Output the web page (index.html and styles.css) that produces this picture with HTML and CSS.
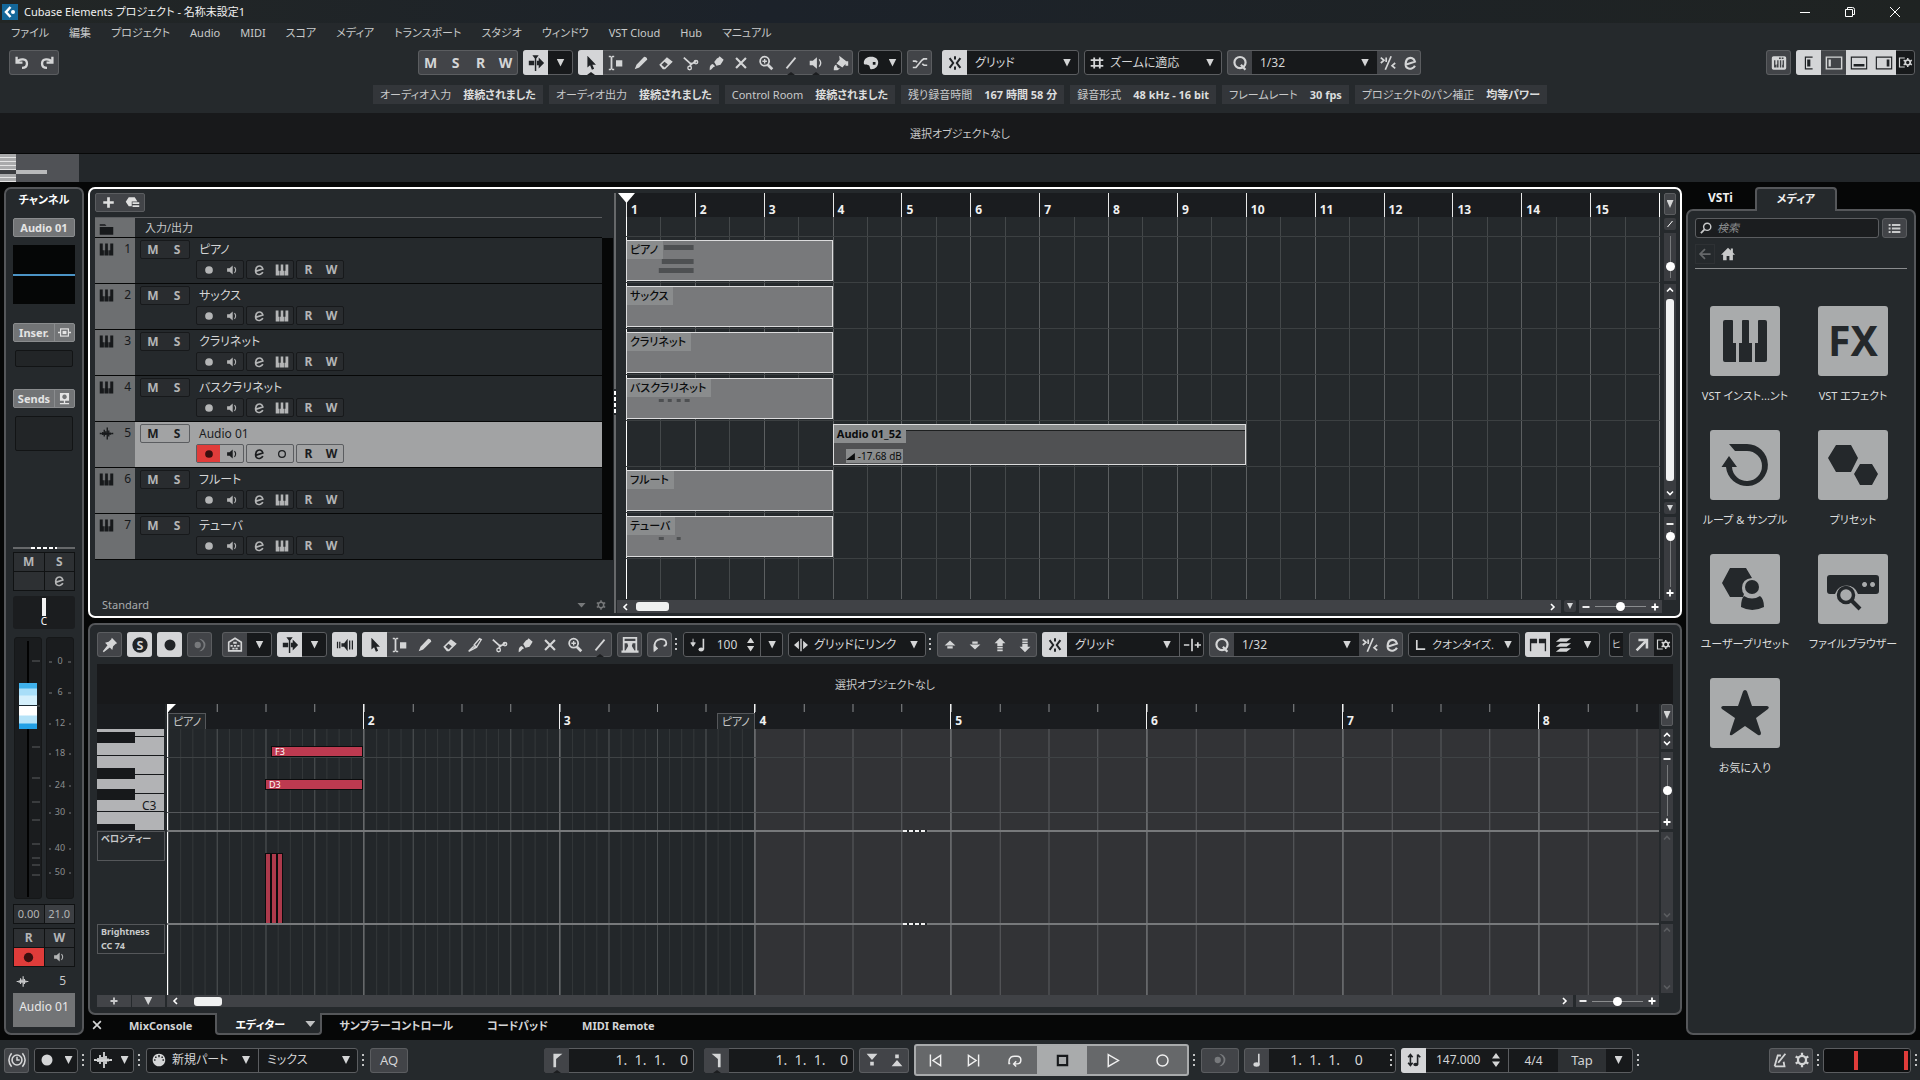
FILE: index.html
```html
<!DOCTYPE html>
<html lang="ja">
<head>
    <meta charset="UTF-8">
    <title>Cubase Elements プロジェクト - 名称未設定1</title>
    <link rel="stylesheet" href="styles.css">
</head>
<body>

<!-- icon set -->
<svg class="defs" width="0" height="0" aria-hidden="true">
    <symbol id="i-undo" viewBox="0 0 20 20"><path d="M4 3v6.500H10.500M4.500 9C7.500 4.500 15.500 5 15.500 10.500c0 3-2 5-5.500 5" fill="none" stroke="currentColor" stroke-width="2.600"/></symbol>
    <symbol id="i-redo" viewBox="0 0 20 20"><path d="M16 3v6.500H9.500M15.500 9C12.500 4.500 4.500 5 4.500 10.500c0 3 2 5 5.500 5" fill="none" stroke="currentColor" stroke-width="2.600"/></symbol>
    <symbol id="i-scroll" viewBox="0 0 20 20"><path d="M2 7.500h6v5H2zM11 7.500h2V4l6 6-6 6v-3.500h-2zM6 1.500h7L10.300 5v14H8.700V5z"/></symbol>
    <symbol id="i-arrow" viewBox="0 0 20 20"><path d="M6 2v13l3-2.500 2 5 2.500-1-2-4.500H15.500z"/></symbol>
    <symbol id="i-range" viewBox="0 0 20 20"><path d="M2 2h2l1 1 1-1h2v1.500H6v13h2V18H6l-1-1-1 1H2v-1.500h2v-13H2zM10 7h7v7h-7z"/></symbol>
    <symbol id="i-pencil" viewBox="0 0 20 20"><path d="M3 17l2-5L13.500 3q3 0 3.500 3L8 15z"/></symbol>
    <symbol id="i-eraser" viewBox="0 0 20 20"><path fill-rule="evenodd" d="M2.500 12L11 3.500l6.500 5L9 17H6.500zM5 12l3.500 3L12 11.500 8.300 8.500z"/></symbol>
    <symbol id="i-scissors" viewBox="0 0 20 20"><path d="M2 4l9 8M16 8L9 12M10 9.500l-1 5" fill="none" stroke="currentColor" stroke-width="2"/><circle cx="8.500" cy="15.500" r="2" fill="none" stroke="currentColor" stroke-width="1.500"/><circle cx="15.500" cy="9" r="2" fill="none" stroke="currentColor" stroke-width="1.500"/></symbol>
    <symbol id="i-glue" viewBox="0 0 20 20"><path d="M8 9l3-4 2-1 1-1.500 4.500 4L17 9l-2 3-4.500 1zM3 16q0-4 3.500-5l2.500 2.500Q7 14 5 17L3 18z"/></symbol>
    <symbol id="i-x" viewBox="0 0 20 20"><path d="M4.500 4.500l11 11M15.500 4.500l-11 11" fill="none" stroke="currentColor" stroke-width="2.400"/></symbol>
    <symbol id="i-zoom" viewBox="0 0 20 20"><circle cx="8.500" cy="8" r="5" fill="none" stroke="currentColor" stroke-width="2"/><path d="M12 12l5 5" stroke="currentColor" stroke-width="3"/><path d="M6 8h5M8.500 5.500v5" stroke="currentColor" stroke-width="1.500"/></symbol>
    <symbol id="i-line" viewBox="0 0 20 20"><path d="M5 16L15 4" stroke="currentColor" stroke-width="2"/></symbol>
    <symbol id="i-speaker" viewBox="0 0 20 20"><path d="M3 7.500h3.500L11 3.500v13l-4.500-4H3z"/><path d="M13.500 6q3.500 4 0 8" fill="none" stroke="currentColor" stroke-width="1.500"/></symbol>
    <symbol id="i-bucket" viewBox="0 0 20 20"><path d="M8 2l9 7-5.500 6L5 10.500l3.500-4zM15 8h3v5h-3zM2 17q0-5 3-5 0 4 4 4l-3 2H2z"/></symbol>
    <symbol id="i-palette" viewBox="0 0 20 20"><path fill-rule="evenodd" d="M2 10C2 5 6 3 10.500 3S18 5.500 18 9.500 15 17 10.500 17c-2.500 0-1-3-3-4.500S2 13 2 10zM12 9v3h3V9z"/></symbol>
    <symbol id="i-cross" viewBox="0 0 20 20"><path d="M2 15h3.500L12 7l2-1.500h4M2 8h3l2 1M12.500 11l2 1.500h3.500" fill="none" stroke="currentColor" stroke-width="1.900"/></symbol>
    <symbol id="i-snap" viewBox="0 0 20 20"><path d="M4 4.500L8 10l-4 5.500M16 4.500L12 10l4 5.500M10 2.500v3.500M10 14v3.500" fill="none" stroke="currentColor" stroke-width="2.200"/></symbol>
    <symbol id="i-hash" viewBox="0 0 20 20"><path d="M1 6h18M1 14h18M6 2v16M14 2v16" fill="none" stroke="currentColor" stroke-width="2.600"/></symbol>
    <symbol id="i-q" viewBox="0 0 20 20"><circle cx="10" cy="9.500" r="6.200" fill="none" stroke="currentColor" stroke-width="2.400"/><path d="M11 12l5 5.500" stroke="currentColor" stroke-width="2.400"/></symbol>
    <symbol id="i-swing" viewBox="0 0 20 20"><path d="M13.500 2.500L7 17.500M2 4l3.500 3L2 10M18 10l-3.500 3 3.500 3M8 4v5" fill="none" stroke="currentColor" stroke-width="1.900"/></symbol>
    <symbol id="i-e" viewBox="0 0 20 20"><path d="M5 12L15.500 8.500C14.500 4.500 11 3.500 8 5S4 13.500 7 15.500s7 .500 8.500-2.500" fill="none" stroke="currentColor" stroke-width="2.400"/></symbol>
    <symbol id="i-keys" viewBox="0 0 20 20"><path d="M1 2h4v9h1.500v7H1zM8.200 2h3.600v9h1v7H7.200v-7h1zM15 2h4v16h-5.500v-7H15z"/></symbol>
    <symbol id="i-keysbox" viewBox="0 0 20 20"><path fill-rule="evenodd" d="M4 2.500h12q2 0 2 2v11q0 2-2 2H4q-2 0-2-2v-11q0-2 2-2zM4.500 7v8H7v-3H6V7zM8 7v4.500h-.500V15h2V7zM11 7v8h1.500V7zM14 7v5h-.500v3h2V7zM10 4v1.500h2V4zM13 4v1.500h2V4z"/></symbol>
    <symbol id="i-zl" viewBox="0 0 20 20"><path d="M14 3.500H6v13h8" fill="none" stroke="currentColor" stroke-width="1.300"/><path d="M8 6h3.500v8H8z"/></symbol>
    <symbol id="i-zi" viewBox="0 0 20 20"><path d="M1.500 3.500h17v13h-17z" fill="none" stroke="currentColor" stroke-width="1.600"/><path d="M4 6h2.500v8H4z"/></symbol>
    <symbol id="i-zb" viewBox="0 0 20 20"><path d="M1.500 3.500h17v13h-17z" fill="none" stroke="currentColor" stroke-width="1.300"/><path d="M4 11h12v3H4z"/></symbol>
    <symbol id="i-zr" viewBox="0 0 20 20"><path d="M1.500 3.500h17v13h-17z" fill="none" stroke="currentColor" stroke-width="1.300"/><path d="M13 6h3v8h-3z"/></symbol>
    <symbol id="i-setup" viewBox="0 0 20 20"><path d="M9 4H2v12h7" fill="none" stroke="currentColor" stroke-width="1.600"/><circle cx="13" cy="10" r="3.300" fill="none" stroke="currentColor" stroke-width="2.200"/><path d="M13 4v2.500M13 13.500V16M7.500 7l2 1M16.500 12l2 1M7.500 13l2-1M16.500 8l2-1" stroke="currentColor" stroke-width="2"/></symbol>
    <symbol id="i-gear" viewBox="0 0 20 20"><circle cx="10" cy="10" r="4.500" fill="none" stroke="currentColor" stroke-width="2.500"/><path d="M10 2v4M10 14v4M3 6l3.500 2M13.500 12l3.500 2M3 14l3.500-2M13.500 8L17 6" stroke="currentColor" stroke-width="2.500"/></symbol>
    <symbol id="i-plus" viewBox="0 0 20 20"><path d="M10 3v14M3 10h14" stroke="currentColor" stroke-width="3.600"/></symbol>
    <symbol id="i-minus" viewBox="0 0 20 20"><path d="M3 10h14" stroke="currentColor" stroke-width="3.600"/></symbol>
    <symbol id="i-preset" viewBox="0 0 20 20"><path d="M5 3h8l3.500 5.500H9V15H5L1 9zM10 9.500h9v2.500h-9zM10 13.500h9V16h-9z"/></symbol>
    <symbol id="i-folder" viewBox="0 0 20 20"><path d="M1 3h7l2 2H1zM1 6.500h18V17H1z"/></symbol>
    <symbol id="i-wave" viewBox="0 0 20 20"><path d="M1 10h2.500M19 10h-2.500M5 8v4M7 5v9M9 7v5M11 2v16M13 6v8M15 8.500v3" stroke="currentColor" stroke-width="1.800"/><path d="M3 9.500h14v1.500H3z"/></symbol>
    <symbol id="i-dot" viewBox="0 0 20 20"><circle cx="10" cy="10" r="5.500"/></symbol>
    <symbol id="i-ring" viewBox="0 0 20 20"><circle cx="10" cy="10" r="4.800" fill="none" stroke="currentColor" stroke-width="1.800"/></symbol>
    <symbol id="i-insert" viewBox="0 0 20 20"><path d="M0 10h4M16 10h4" stroke="currentColor" stroke-width="2"/><rect x="4" y="4.500" width="12" height="11" fill="none" stroke="currentColor" stroke-width="1.800"/><path d="M7 7.500h6v5H7z"/></symbol>
    <symbol id="i-send" viewBox="0 0 20 20"><path fill-rule="evenodd" d="M3 1.500h14v12H3zM10 4a3.500 3.500 0 1 0 .100 0z"/><path d="M10 12v5M3 18h14" stroke="currentColor" stroke-width="2"/></symbol>
    <symbol id="i-pin" viewBox="0 0 20 20"><path d="M12 2l6 6-1.500.500-3 3-1 4-2.700-2.700L3 18l-1-1 5.200-6.800L4.500 7.500l4-1 3-3z"/></symbol>
    <symbol id="i-moon" viewBox="0 0 20 20"><path d="M9 3a7 7 0 1 1 0 14q5-3 5-7t-5-7z"/><circle cx="7.500" cy="10" r="3.500"/></symbol>
    <symbol id="i-home2" viewBox="0 0 20 20"><path d="M3 16.500V7l7-4.500L17 7v9.500z" fill="none" stroke="currentColor" stroke-width="1.800"/><path d="M8 6.500h4v2H8zM5 10h2.500v2H5zM8.800 10h2.500v2H8.800zM12.500 10H15v2h-2.500zM7 13h2.500v2H7zM10.500 13H13v2h-2.500z"/></symbol>
    <symbol id="i-fb" viewBox="0 0 20 20"><path d="M6 8h3l4-5v14l-4-5H6zM1 6.500h1.400v7H1zM3.500 6.500h1.400v7H3.500zM14.500 5h1.400v10h-1.400zM17.500 5h1.400v10h-1.400z"/></symbol>
    <symbol id="i-knife" viewBox="0 0 20 20"><path d="M3 17l5-5 3 1zM9 10l6-7 2 1-5 8z" fill="none" stroke="currentColor" stroke-width="1.500"/></symbol>
    <symbol id="i-frame" viewBox="0 0 20 20"><path fill-rule="evenodd" d="M2 1h16v15h1.500v2.500h-19V16H2zM4 3v2.500h12V3zM4 8v8h1l3-5-1-3zM16 8h-3l-1 3 3 5h1z"/></symbol>
    <symbol id="i-loopedit" viewBox="0 0 20 20"><path d="M4 16V11C4 2 17 1 17 8q0 3-3 3" fill="none" stroke="currentColor" stroke-width="2"/><path d="M3 18V9l5 5z"/></symbol>
    <symbol id="i-vel" viewBox="0 0 20 20"><path d="M4.500 3v8M2 7.500l2.500 4 2.500-4z" stroke="currentColor"/><path d="M16 3v12" stroke="currentColor" stroke-width="1.800"/><ellipse cx="13.500" cy="15" rx="3" ry="2.200"/></symbol>
    <symbol id="i-link" viewBox="0 0 20 20"><path d="M7 4v12L0 10zM13 4v12l7-6zM9 1h2v18H9z"/></symbol>
    <symbol id="i-up" viewBox="0 0 20 20"><path d="M10 5l6 5.500H4zM7 11.500h6V14H7z"/></symbol>
    <symbol id="i-down" viewBox="0 0 20 20"><path d="M10 15l6-5.500H4zM7 6h6v2.500H7z"/></symbol>
    <symbol id="i-up8" viewBox="0 0 20 20"><path d="M10 2l6 6h-3v3H7V8H4zM7 12h6v2H7zM7 15h6v2H7z"/></symbol>
    <symbol id="i-down8" viewBox="0 0 20 20"><path d="M10 18l6-6h-3V9H7v3H4zM7 6h6v2H7zM7 3h6v2H7z"/></symbol>
    <symbol id="i-nudge" viewBox="0 0 20 20"><path d="M1 10h6M10 3v14M13 10h7M16.500 7v6" fill="none" stroke="currentColor" stroke-width="1.900"/></symbol>
    <symbol id="i-l" viewBox="0 0 20 20"><path d="M4 3v13h12" fill="none" stroke="currentColor" stroke-width="2.400"/></symbol>
    <symbol id="i-part" viewBox="0 0 20 20"><path d="M1 3h8v5H2.500v9H1zM11 3h8v14h-1.500V8H11z"/></symbol>
    <symbol id="i-layers" viewBox="0 0 20 20"><path d="M7 2.500h12L14 6.500H2zM7 8h12l-5 4H2zM7 13.500h12l-5 4H2z"/></symbol>
    <symbol id="i-open" viewBox="0 0 20 20"><path d="M4 16L14 6M6 4.500h9.500V14" fill="none" stroke="currentColor" stroke-width="2.800"/></symbol>
    <symbol id="i-glass" viewBox="0 0 20 20"><circle cx="12" cy="8" r="6" fill="none" stroke="currentColor" stroke-width="2.400"/><path d="M8 12l-6.500 6.500" stroke="currentColor" stroke-width="3"/></symbol>
    <symbol id="i-list" viewBox="0 0 20 20"><path d="M1 3h3v3H1zM6 3h13v3H6zM1 8.500h3v3H1zM6 8.500h13v3H6zM1 14h3v3H1zM6 14h13v3H6z"/></symbol>
    <symbol id="i-back" viewBox="0 0 20 20"><path d="M18 10H3M10 3l-7 7 7 7" fill="none" stroke="currentColor" stroke-width="2.500"/></symbol>
    <symbol id="i-home" viewBox="0 0 20 20"><path d="M10 1l4 4V2h3v6l3 3h-3v8h-5v-6H8v6H3v-8H0z"/></symbol>
    <symbol id="i-power" viewBox="0 0 20 20"><circle cx="10" cy="10" r="5.500" fill="none" stroke="currentColor" stroke-width="1.800"/><path d="M10 6.500V10h3M4 2.500q-6 7.500 0 15M16 2.500q6 7.500 0 15" fill="none" stroke="currentColor" stroke-width="1.700"/></symbol>
    <symbol id="i-midi" viewBox="0 0 20 20"><path fill-rule="evenodd" d="M10 1a9 9 0 1 1-.100 0zM9 3h2v3H9zM4.500 5h2v2h-2zM13.500 5h2v2h-2zM3 9h2v2H3zM15 9h2v2h-2z"/></symbol>
    <symbol id="i-locl" viewBox="0 0 20 20"><path d="M6 3h10l-7 6v9H6z"/></symbol>
    <symbol id="i-locr" viewBox="0 0 20 20"><path d="M14 3H4l7 6v9h3z"/></symbol>
    <symbol id="i-pin1" viewBox="0 0 20 20"><path d="M4 3h12l-6 7zM8 12h4v4H8z"/></symbol>
    <symbol id="i-pin2" viewBox="0 0 20 20"><path d="M4 17h12l-6-7zM8 4h4v4H8z"/></symbol>
    <symbol id="i-prev" viewBox="0 0 20 20"><path d="M4 3v14M16 4v12L7 10z" fill="none" stroke="currentColor" stroke-width="1.700"/></symbol>
    <symbol id="i-next" viewBox="0 0 20 20"><path d="M16 3v14M4 4v12l9-6z" fill="none" stroke="currentColor" stroke-width="1.700"/></symbol>
    <symbol id="i-cycle" viewBox="0 0 20 20"><path d="M5 13.500H3.500C3 5 8 5 10 5h3c6 0 6 9 0 9h-4M12 11l-3 3 3 3" fill="none" stroke="currentColor" stroke-width="1.700"/></symbol>
    <symbol id="i-stop" viewBox="0 0 20 20"><path d="M4.500 4.500h11v11h-11z" fill="none" stroke="currentColor" stroke-width="2.500"/></symbol>
    <symbol id="i-play" viewBox="0 0 20 20"><path d="M5 3l12 7-12 7z" fill="none" stroke="currentColor" stroke-width="1.700"/></symbol>
    <symbol id="i-rec" viewBox="0 0 20 20"><circle cx="10" cy="10" r="6.500" fill="none" stroke="currentColor" stroke-width="1.700"/></symbol>
    <symbol id="i-note" viewBox="0 0 20 20"><path d="M12 3v12" stroke="currentColor" stroke-width="1.800"/><ellipse cx="9.500" cy="15" rx="3.500" ry="2.500"/></symbol>
    <symbol id="i-tempo" viewBox="0 0 20 20"><path d="M6 4v12M14 4v11M14 4l3 3M3.500 7L6 4l2.500 3M3.500 13L6 16l2.500-3" fill="none" stroke="currentColor" stroke-width="1.800"/><ellipse cx="12" cy="15" rx="2.800" ry="2"/></symbol>
    <symbol id="i-metro" viewBox="0 0 20 20"><path d="M4 17L7.500 5h3.500M4 17h11l-1-5M8 13l8-10" fill="none" stroke="currentColor" stroke-width="2"/></symbol>
</svg>

<header class="titlebar">
    <svg class="logo" viewBox="0 0 16 16"><path class="logo-bg" d="M0 0h16v16H0z"/><path d="M8.500 3L4 8l4.500 5" fill="none" stroke="#fff" stroke-width="2.500"/><circle cx="11" cy="8" r="2" fill="#fff"/></svg>
    <h1>Cubase Elements プロジェクト - 名称未設定1</h1>
    <div class="winbtns">
        <button aria-label="最小化"><svg viewBox="0 0 12 12"><path d="M1 6.500h10"/></svg></button>
        <button aria-label="元に戻す"><svg viewBox="0 0 12 12"><path d="M1.500 3.500h7v7h-7zM3.500 3.500v-2h5q2 0 2 2v5h-2"/></svg></button>
        <button aria-label="閉じる"><svg viewBox="0 0 12 12"><path d="M1 1l10 10M11 1L1 11"/></svg></button>
    </div>
</header>

<nav class="menu">
    <a href="#">ファイル</a><a href="#">編集</a><a href="#">プロジェクト</a><a href="#">Audio</a><a href="#">MIDI</a><a href="#">スコア</a><a href="#">メディア</a><a href="#">トランスポート</a><a href="#">スタジオ</a><a href="#">ウィンドウ</a><a href="#">VST Cloud</a><a href="#">Hub</a><a href="#">マニュアル</a>
</nav>

<div class="toolbar">
    <div class="grp">
        <button aria-label="元に戻す"><svg><use href="#i-undo"/></svg></button>
        <button aria-label="再実行"><svg><use href="#i-redo"/></svg></button>
    </div>
    <div class="tools">
        <div class="grp"><button>M</button><button>S</button><button>R</button><button>W</button></div>
        <div class="grp"><button class="on" aria-label="オートスクロール"><svg><use href="#i-scroll"/></svg></button><button class="caret" aria-label="オートスクロール設定"></button></div>
        <div class="grp">
            <button class="on notch" aria-label="選択"><svg><use href="#i-arrow"/></svg></button>
            <button aria-label="範囲選択"><svg><use href="#i-range"/></svg></button>
            <button aria-label="鉛筆"><svg><use href="#i-pencil"/></svg></button>
            <button aria-label="消しゴム"><svg><use href="#i-eraser"/></svg></button>
            <button aria-label="はさみ"><svg><use href="#i-scissors"/></svg></button>
            <button aria-label="のり"><svg><use href="#i-glue"/></svg></button>
            <button aria-label="ミュート"><svg><use href="#i-x"/></svg></button>
            <button aria-label="ズーム"><svg><use href="#i-zoom"/></svg></button>
            <button class="notch" aria-label="ライン"><svg><use href="#i-line"/></svg></button>
            <button class="notch" aria-label="再生"><svg><use href="#i-speaker"/></svg></button>
            <button aria-label="カラー"><svg><use href="#i-bucket"/></svg></button>
        </div>
        <div class="grp dark"><button aria-label="カラーパレット"><svg><use href="#i-palette"/></svg></button><button class="caret thin" aria-label="カラー一覧"></button></div>
        <div class="grp"><button aria-label="クロスフェード"><svg><use href="#i-cross"/></svg></button></div>
        <div class="grp gap-l">
            <button class="on" aria-label="スナップ"><svg><use href="#i-snap"/></svg></button>
            <span class="pick w110"><select aria-label="スナップタイプ"><option>グリッド</option></select></span>
        </div>
        <div class="grp"><span class="pick w135 lead"><svg><use href="#i-hash"/></svg><select aria-label="グリッドタイプ"><option>ズームに適応</option></select></span></div>
        <div class="grp">
            <button aria-label="クオンタイズ"><svg><use href="#i-q"/></svg></button>
            <span class="pick w125"><select aria-label="クオンタイズプリセット"><option>1/32</option></select></span>
            <button class="slim" aria-label="スウィング"><svg><use href="#i-swing"/></svg></button>
            <button class="slim" aria-label="クオンタイズパネル"><svg><use href="#i-e"/></svg></button>
        </div>
    </div>
    <div class="tools">
        <div class="grp"><button aria-label="キーボード"><svg><use href="#i-keysbox"/></svg></button></div>
        <div class="grp">
            <button class="on" aria-label="左ゾーン"><svg><use href="#i-zl"/></svg></button>
            <button aria-label="インスペクター"><svg><use href="#i-zi"/></svg></button>
            <button class="on" aria-label="下ゾーン"><svg><use href="#i-zb"/></svg></button>
            <button class="on" aria-label="右ゾーン"><svg><use href="#i-zr"/></svg></button>
            <button class="thin ink" aria-label="設定"><svg><use href="#i-setup"/></svg></button>
        </div>
    </div>
</div>

<div class="status">
    <div><span>オーディオ入力</span><b>接続されました</b></div>
    <div><span>オーディオ出力</span><b>接続されました</b></div>
    <div><span>Control Room</span><b>接続されました</b></div>
    <div><span>残り録音時間</span><b>167 時間 58 分</b></div>
    <div><span>録音形式</span><b>48 kHz - 16 bit</b></div>
    <div><span>フレームレート</span><b>30 fps</b></div>
    <div><span>プロジェクトのパン補正</span><b>均等パワー</b></div>
</div>

<p class="infoline">選択オブジェクトなし</p>

<div class="overview"><div class="view"><i></i><b></b></div></div>

<main class="zones">

    <!-- channel strip -->
    <aside class="channel">
        <h2>チャンネル</h2>
        <button class="plate">Audio 01</button>
        <div class="eq"></div>
        <div class="plate split"><span>Inser.</span><svg><use href="#i-insert"/></svg></div>
        <div class="slot"></div>
        <div class="plate split sends"><span>Sends</span><svg><use href="#i-send"/></svg></div>
        <div class="slot tall"></div>
        <div class="handle"></div>
        <div class="cells"><button>M</button><button>S</button><span></span><button aria-label="編集"><svg><use href="#i-e"/></svg></button></div>
        <div class="pan"><i></i><span>C</span></div>
        <div class="faders">
            <div class="lane">
                <svg class="marks" viewBox="0 0 28 262"><path d="M18 24h8M18 110h8M18 141h8M18 165h8M18 183h8M18 207h8M18 221h8M18 228h8M18 238h8M23 69h3" stroke="#5a5c5e"/></svg>
                <input class="fader" type="range" min="0" max="100" value="80" aria-label="音量">
            </div>
            <div class="lane">
                <svg class="marks" viewBox="0 0 28 262">
                    <path d="M3 25h3M22 25h3M3 56h3M22 56h3M3 87h2M23 87h2M3 117h2M23 117h2M3 149h2M23 149h2M3 176h2M23 176h2M3 212h2M23 212h2M3 236h2M23 236h2" stroke="#77797b"/>
                    <g text-anchor="middle"><text x="14" y="27">0</text><text x="14" y="58">6</text><text x="14" y="89">12</text><text x="14" y="119">18</text><text x="14" y="151">24</text><text x="14" y="178">30</text><text x="14" y="214">40</text><text x="14" y="238">50</text></g>
                </svg>
            </div>
        </div>
        <div class="cells values"><span>0.00</span><span class="lit">21.0</span></div>
        <div class="cells auto"><button>R</button><button>W</button><button class="rec" aria-label="録音可能"><svg><use href="#i-dot"/></svg></button><button aria-label="モニター"><svg><use href="#i-speaker"/></svg></button></div>
        <div class="chno"><svg><use href="#i-wave"/></svg><span>5</span></div>
        <div class="chname">Audio 01</div>
    </aside>

    <div class="center">

        <!-- project zone -->
        <section class="panel arrange">
            <div class="tracks">
                <div class="trackbar"><button aria-label="トラックを追加"><svg><use href="#i-plus"/></svg></button><button aria-label="トラックプリセット"><svg><use href="#i-preset"/></svg></button></div>
                <div class="io"><span class="tag"><svg><use href="#i-folder"/></svg></span><span>入力/出力</span></div>

                <div class="track">
                    <div class="tag"><svg><use href="#i-keys"/></svg><span>1</span></div>
                    <div class="pair ms"><button>M</button><button>S</button></div>
                    <div class="body"><span class="name">ピアノ</span>
                        <div class="ctl"><div class="pair"><button aria-label="録音可能"><svg><use href="#i-dot"/></svg></button><button aria-label="モニター"><svg><use href="#i-speaker"/></svg></button></div><div class="pair"><button aria-label="編集"><svg><use href="#i-e"/></svg></button><button aria-label="音源"><svg><use href="#i-keys"/></svg></button></div><div class="pair"><button>R</button><button>W</button></div></div></div>
                </div>
                <div class="track">
                    <div class="tag"><svg><use href="#i-keys"/></svg><span>2</span></div>
                    <div class="pair ms"><button>M</button><button>S</button></div>
                    <div class="body"><span class="name">サックス</span>
                        <div class="ctl"><div class="pair"><button aria-label="録音可能"><svg><use href="#i-dot"/></svg></button><button aria-label="モニター"><svg><use href="#i-speaker"/></svg></button></div><div class="pair"><button aria-label="編集"><svg><use href="#i-e"/></svg></button><button aria-label="音源"><svg><use href="#i-keys"/></svg></button></div><div class="pair"><button>R</button><button>W</button></div></div></div>
                </div>
                <div class="track">
                    <div class="tag"><svg><use href="#i-keys"/></svg><span>3</span></div>
                    <div class="pair ms"><button>M</button><button>S</button></div>
                    <div class="body"><span class="name">クラリネット</span>
                        <div class="ctl"><div class="pair"><button aria-label="録音可能"><svg><use href="#i-dot"/></svg></button><button aria-label="モニター"><svg><use href="#i-speaker"/></svg></button></div><div class="pair"><button aria-label="編集"><svg><use href="#i-e"/></svg></button><button aria-label="音源"><svg><use href="#i-keys"/></svg></button></div><div class="pair"><button>R</button><button>W</button></div></div></div>
                </div>
                <div class="track">
                    <div class="tag"><svg><use href="#i-keys"/></svg><span>4</span></div>
                    <div class="pair ms"><button>M</button><button>S</button></div>
                    <div class="body"><span class="name">バスクラリネット</span>
                        <div class="ctl"><div class="pair"><button aria-label="録音可能"><svg><use href="#i-dot"/></svg></button><button aria-label="モニター"><svg><use href="#i-speaker"/></svg></button></div><div class="pair"><button aria-label="編集"><svg><use href="#i-e"/></svg></button><button aria-label="音源"><svg><use href="#i-keys"/></svg></button></div><div class="pair"><button>R</button><button>W</button></div></div></div>
                </div>
                <div class="track selected">
                    <div class="tag"><svg><use href="#i-wave"/></svg><span>5</span></div>
                    <div class="pair ms"><button>M</button><button>S</button></div>
                    <div class="body"><span class="name">Audio 01</span>
                        <div class="ctl"><div class="pair"><button class="rec" aria-label="録音可能"><svg><use href="#i-dot"/></svg></button><button aria-label="モニター"><svg><use href="#i-speaker"/></svg></button></div><div class="pair"><button aria-label="編集"><svg><use href="#i-e"/></svg></button><button aria-label="チャンネル"><svg><use href="#i-ring"/></svg></button></div><div class="pair"><button>R</button><button>W</button></div></div></div>
                </div>
                <div class="track">
                    <div class="tag"><svg><use href="#i-keys"/></svg><span>6</span></div>
                    <div class="pair ms"><button>M</button><button>S</button></div>
                    <div class="body"><span class="name">フルート</span>
                        <div class="ctl"><div class="pair"><button aria-label="録音可能"><svg><use href="#i-dot"/></svg></button><button aria-label="モニター"><svg><use href="#i-speaker"/></svg></button></div><div class="pair"><button aria-label="編集"><svg><use href="#i-e"/></svg></button><button aria-label="音源"><svg><use href="#i-keys"/></svg></button></div><div class="pair"><button>R</button><button>W</button></div></div></div>
                </div>
                <div class="track">
                    <div class="tag"><svg><use href="#i-keys"/></svg><span>7</span></div>
                    <div class="pair ms"><button>M</button><button>S</button></div>
                    <div class="body"><span class="name">テューバ</span>
                        <div class="ctl"><div class="pair"><button aria-label="録音可能"><svg><use href="#i-dot"/></svg></button><button aria-label="モニター"><svg><use href="#i-speaker"/></svg></button></div><div class="pair"><button aria-label="編集"><svg><use href="#i-e"/></svg></button><button aria-label="音源"><svg><use href="#i-keys"/></svg></button></div><div class="pair"><button>R</button><button>W</button></div></div></div>
                </div>

                <div class="trackfoot"><span>Standard</span><i></i><svg><use href="#i-gear"/></svg></div>
            </div>

            <div class="divider"></div>

            <div class="timeline">
                <div class="ruler"><span>1</span><span>2</span><span>3</span><span>4</span><span>5</span><span>6</span><span>7</span><span>8</span><span>9</span><span>10</span><span>11</span><span>12</span><span>13</span><span>14</span><span>15</span></div>
                <div class="events">
                    <div class="grid"><i></i><i></i><i></i><i></i><i></i><i></i><i></i><i></i><i></i><i></i><i></i><i></i><i></i><i></i><i></i></div>
                    <div class="row short"></div>
                    <div class="row"><div class="event"><span>ピアノ</span><svg viewBox="0 0 206 41" preserveAspectRatio="none"><path d="M38 5h30v5H38zM36 19h32v5H36zM33 28h35v5H33z"/></svg></div></div>
                    <div class="row"><div class="event"><span>サックス</span></div></div>
                    <div class="row"><div class="event"><span>クラリネット</span></div></div>
                    <div class="row"><div class="event"><span>バスクラリネット</span><svg viewBox="0 0 206 41" preserveAspectRatio="none"><path d="M33 21h5v3h-5zM42 21h4v3h-4zM51 21h4v3h-4zM59 21h5v3h-5z"/></svg></div></div>
                    <div class="row"><div class="event audio"><span>Audio 01_52</span><em><svg viewBox="0 0 10 8"><path d="M0 8L10 0v8z"/></svg>-17.68 dB</em></div></div>
                    <div class="row"><div class="event"><span>フルート</span></div></div>
                    <div class="row"><div class="event"><span>テューバ</span><svg viewBox="0 0 206 41" preserveAspectRatio="none"><path d="M33 21h5v3h-5zM51 21h4v3h-4z"/></svg></div></div>
                </div>
                <div class="hscroll">
                    <div class="bar"><svg viewBox="0 0 8 8"><path d="M6 1L3 4l3 3"/></svg><i></i><svg class="end" viewBox="0 0 8 8"><path d="M2 1l3 3-3 3"/></svg></div>
                    <button class="mini caret" aria-label="ズームプリセット"></button>
                    <div class="hzoom"><svg><use href="#i-minus"/></svg><input type="range" value="50" aria-label="横ズーム"><svg><use href="#i-plus"/></svg></div>
                </div>
            </div>

            <div class="vcol">
                <button class="mini caret tall" aria-label="ルーラー設定"></button>
                <button class="mini" aria-label="波形ズーム"><svg><use href="#i-line"/></svg></button>
                <div class="vzoom wave"><input type="range" value="20" aria-label="波形の高さ"></div>
                <div class="vscroll"><svg viewBox="0 0 8 8"><path d="M1 5.500l3-3 3 3"/></svg><i></i><svg viewBox="0 0 8 8"><path d="M1 2.500l3 3 3-3"/></svg></div>
                <button class="mini caret" aria-label="高さプリセット"></button>
                <div class="vzoom"><svg><use href="#i-minus"/></svg><input type="range" value="96" aria-label="縦ズーム"><svg><use href="#i-plus"/></svg></div>
            </div>
        </section>

        <!-- key editor -->
        <section class="panel editor">
            <div class="toolbar keytools">
                <div class="grp"><button aria-label="固定"><svg><use href="#i-pin"/></svg></button></div>
                <div class="grp"><button class="on solo" aria-label="ソロ"><svg viewBox="0 0 20 20"><circle cx="10" cy="10" r="8.500"/><text x="10" y="15" text-anchor="middle">S</text></svg></button></div>
                <div class="grp"><button class="on big" aria-label="録音"><svg><use href="#i-dot"/></svg></button></div>
                <div class="grp"><button class="off" aria-label="レトロスペクティブ録音"><svg><use href="#i-moon"/></svg></button></div>
                <div class="grp gap-l"><button aria-label="レイアウト"><svg><use href="#i-home2"/></svg></button><button class="caret" aria-label="レイアウト一覧"></button></div>
                <div class="grp"><button class="on" aria-label="オートスクロール"><svg><use href="#i-scroll"/></svg></button><button class="caret" aria-label="スクロール設定"></button></div>
                <div class="grp"><button class="on" aria-label="試聴"><svg><use href="#i-fb"/></svg></button></div>
                <div class="grp">
                    <button class="on" aria-label="選択"><svg><use href="#i-arrow"/></svg></button>
                    <button aria-label="範囲"><svg><use href="#i-range"/></svg></button>
                    <button aria-label="鉛筆"><svg><use href="#i-pencil"/></svg></button>
                    <button aria-label="消しゴム"><svg><use href="#i-eraser"/></svg></button>
                    <button aria-label="トリム"><svg><use href="#i-knife"/></svg></button>
                    <button aria-label="はさみ"><svg><use href="#i-scissors"/></svg></button>
                    <button aria-label="のり"><svg><use href="#i-glue"/></svg></button>
                    <button aria-label="ミュート"><svg><use href="#i-x"/></svg></button>
                    <button aria-label="ズーム"><svg><use href="#i-zoom"/></svg></button>
                    <button class="notch" aria-label="ライン"><svg><use href="#i-line"/></svg></button>
                </div>
                <div class="grp"><button aria-label="パート境界"><svg><use href="#i-frame"/></svg></button></div>
                <div class="grp"><button aria-label="ループ"><svg><use href="#i-loopedit"/></svg></button></div>
                <i class="dots"></i>
                <div class="grp dark vel"><svg><use href="#i-vel"/></svg><input type="text" value="100" aria-label="ベロシティー値"><i class="spin"></i><button class="caret edge" aria-label="ベロシティー一覧"></button></div>
                <div class="grp"><span class="pick w135 lead"><svg><use href="#i-link"/></svg><select aria-label="長さ"><option>グリッドにリンク</option></select></span></div>
                <i class="dots"></i>
                <div class="grp"><button aria-label="上へ"><svg><use href="#i-up"/></svg></button><button aria-label="下へ"><svg><use href="#i-down"/></svg></button><button aria-label="1オクターブ上"><svg><use href="#i-up8"/></svg></button><button aria-label="1オクターブ下"><svg><use href="#i-down8"/></svg></button></div>
                <div class="grp"><button class="on" aria-label="スナップ"><svg><use href="#i-snap"/></svg></button><span class="pick w110"><select aria-label="スナップタイプ"><option>グリッド</option></select></span><button class="ink edge" aria-label="相対"><svg><use href="#i-nudge"/></svg></button></div>
                <div class="grp"><button aria-label="クオンタイズ"><svg><use href="#i-q"/></svg></button><span class="pick w125"><select aria-label="クオンタイズ値"><option>1/32</option></select></span><button class="slim" aria-label="スウィング"><svg><use href="#i-swing"/></svg></button><button class="slim" aria-label="パネル"><svg><use href="#i-e"/></svg></button></div>
                <div class="grp"><span class="pick w110 lead small"><svg><use href="#i-l"/></svg><select aria-label="長さクオンタイズ"><option>クオンタイズ.</option></select></span></div>
                <div class="grp dark"><button class="on" aria-label="パート表示"><svg><use href="#i-part"/></svg></button><button aria-label="レイヤー"><svg><use href="#i-layers"/></svg></button><button class="caret" aria-label="パート一覧"></button></div>
                <div class="clip">ヒ</div>
                <div class="grp last"><button aria-label="別ウィンドウで開く"><svg><use href="#i-open"/></svg></button><button class="thin ink" aria-label="設定"><svg><use href="#i-setup"/></svg></button></div>
            </div>

            <p class="infoline inner">選択オブジェクトなし</p>

            <div class="keyedit">
                <div class="lefts">
                    <svg class="piano" viewBox="0 0 67 101" preserveAspectRatio="none">
                        <path d="M0 0h67v101H0z" fill="#b2b3b5"/>
                        <path d="M38 7.500h29M0 26.500h67M38 45.500h29M38 64.500h29M0 82.500h67" stroke="#17191b"/>
                        <path d="M0 3h38v11H0zM0 39h38v11H0zM0 60h38v11H0zM0 95h38v6H0z" fill="#17191b"/>
                        <text x="45" y="81">C3</text>
                    </svg>
                    <div class="ctrlbox">ベロシティー</div>
                    <div class="ctrlbox bright">Brightness<br>CC 74</div>
                    <div class="addctl"><button aria-label="追加"><svg><use href="#i-plus"/></svg></button><button class="caret" aria-label="コントローラー一覧"></button></div>
                </div>
                <div class="roll">
                    <div class="rollruler">
                        <div class="bars"><span></span><span>2</span><span>3</span><span>4</span><span>5</span><span>6</span><span>7</span><span>8</span></div>
                        <b class="part from">ピアノ</b><b class="part to">ピアノ</b>
                    </div>
                    <div class="canvas">
                        <div class="bars"><i class="in"></i><i class="in"></i><i class="in"></i><i></i><i></i><i></i><i></i><i></i></div>
                        <div class="lane32 notes"><b class="n-f3">F3</b><b class="n-d3">D3</b></div>
                        <div class="lane32 velocity"><i></i><i></i><i></i></div>
                        <div class="lane32"></div>
                    </div>
                    <div class="hscroll">
                        <div class="bar"><svg viewBox="0 0 8 8"><path d="M6 1L3 4l3 3"/></svg><i></i><svg class="end" viewBox="0 0 8 8"><path d="M2 1l3 3-3 3"/></svg></div>
                        <div class="hzoom"><svg><use href="#i-minus"/></svg><input type="range" value="50" aria-label="横ズーム"><svg><use href="#i-plus"/></svg></div>
                    </div>
                </div>
                <div class="vcol">
                    <button class="mini caret tall" aria-label="ルーラー設定"></button>
                    <div class="vscroll tiny"><svg viewBox="0 0 8 8"><path d="M1 5.500l3-3 3 3"/></svg><svg viewBox="0 0 8 8"><path d="M1 2.500l3 3 3-3"/></svg></div>
                    <div class="vzoom"><svg><use href="#i-minus"/></svg><input type="range" value="50" aria-label="縦ズーム"><svg><use href="#i-plus"/></svg></div>
                    <div class="vscroll idle"><svg viewBox="0 0 8 8"><path d="M1 5.500l3-3 3 3"/></svg><svg viewBox="0 0 8 8"><path d="M1 2.500l3 3 3-3"/></svg></div>
                    <div class="vscroll idle low"><svg viewBox="0 0 8 8"><path d="M1 5.500l3-3 3 3"/></svg><svg viewBox="0 0 8 8"><path d="M1 2.500l3 3 3-3"/></svg></div>
                </div>
            </div>
        </section>

        <nav class="tabs">
            <button class="close" aria-label="閉じる"><svg><use href="#i-x"/></svg></button>
            <a href="#" class="first">MixConsole</a>
            <a href="#" class="active">エディター<i></i></a>
            <a href="#">サンプラーコントロール</a>
            <a href="#">コードパッド</a>
            <a href="#">MIDI Remote</a>
        </nav>
    </div>

    <!-- media rack -->
    <aside class="media">
        <nav class="racktabs"><a href="#">VSTi</a><a href="#" class="active">メディア</a></nav>
        <div class="rack">
            <div class="search">
                <label><svg><use href="#i-glass"/></svg><input type="text" placeholder="検索" aria-label="検索"></label>
                <button aria-label="一覧"><svg><use href="#i-list"/></svg></button>
            </div>
            <div class="crumbs"><button class="back" aria-label="戻る"><svg><use href="#i-back"/></svg></button><button aria-label="ホーム"><svg><use href="#i-home"/></svg></button></div>
            <div class="tiles">
                <a href="#"><svg viewBox="0 0 70 70"><path d="M15 14h7q1 0 1 1v22h3v19H15q-2 0-2-2V16q0-2 2-2zM32 15q0-1 1-1h5q1 0 1 1v22h3v19H29V37h3zM48 15q0-1 1-1h6q2 0 2 2v38q0 2-2 2H45V37h3z"/></svg>VST インスト...ント</a>
                <a href="#"><svg viewBox="0 0 70 70"><text x="35" y="50" text-anchor="middle">FX</text></svg>VST エフェクト</a>
                <a href="#"><svg viewBox="0 0 70 70"><path d="M19 14h18a21 21 0 1 1-21 23h-4.500L19 26l8 11h-5a15 15 0 1 0 15-16H25z"/></svg>ループ &amp; サンプル</a>
                <a href="#"><svg viewBox="0 0 70 70"><path d="M18 15h15l7 13-7 14H18l-8-14zM42 34h12l6 10-6 11H42l-6-11z"/></svg>プリセット</a>
                <a href="#"><svg viewBox="0 0 70 70"><path d="M20 14h16l6 10q-10 1-10 10 0 4 2 6l-1 3H20l-8-14z"/><circle cx="42" cy="33" r="7"/><path d="M34 42q8 5 16 0 4 3 4 11-12 6-23 0 0-8 3-11z"/></svg>ユーザープリセット</a>
                <a href="#"><svg viewBox="0 0 70 70"><path fill-rule="evenodd" d="M12 21h46q3 0 3 3v13q0 3-3 3H40a12 12 0 0 0-23 0h-5q-3 0-3-3V24q0-3 3-3zM46.500 28a2.500 2.500 0 1 0 .100 0zM54.500 28a2.500 2.500 0 1 0 .100 0z"/><circle cx="28" cy="41" r="7.500" fill="none" stroke="#24282b" stroke-width="3.500"/><path d="M33 46l9 9" stroke="#24282b" stroke-width="4"/></svg>ファイルブラウザー</a>
                <a href="#"><svg viewBox="0 0 70 70"><path d="M35 12q1.500 0 2 1.500L42 28h15q3 1 1 3L46 40l5 15q0 3-3 2l-13-9-13 9q-3 1-2-2l5-15-13-9q-2-2 1-3h15l5-14.500q.500-1.500 2-1.500z"/></svg>お気に入り</a>
            </div>
        </div>
    </aside>
</main>

<footer class="transport">
    <div class="grp"><button aria-label="オーディオ有効"><svg><use href="#i-power"/></svg></button></div>
    <div class="grp dark"><button class="big" aria-label="録音モード"><svg><use href="#i-dot"/></svg></button><button class="caret thin" aria-label="録音モード一覧"></button></div>
    <i class="dots"></i>
    <div class="grp dark"><button class="big" aria-label="オーディオ録音"><svg><use href="#i-wave"/></svg></button><button class="caret thin" aria-label="オーディオ録音一覧"></button></div>
    <i class="dots"></i>
    <div class="grp"><span class="pick w110 lead"><svg><use href="#i-midi"/></svg><select aria-label="MIDI録音"><option>新規パート</option></select></span><span class="pick w100 edge"><select aria-label="MIDIサイクル"><option>ミックス</option></select></span></div>
    <i class="dots"></i>
    <div class="grp"><button class="wide" aria-label="自動クオンタイズ"><span>AQ</span></button></div>
    <div class="grp loc first"><button class="notch" aria-label="左ロケーター"><svg><use href="#i-locl"/></svg></button><output>1.  1.  1.    0</output></div>
    <div class="grp loc"><button class="notch" aria-label="右ロケーター"><svg><use href="#i-locr"/></svg></button><output>1.  1.  1.    0</output></div>
    <div class="grp"><button aria-label="パンチイン"><svg><use href="#i-pin1"/></svg></button><button aria-label="パンチアウト"><svg><use href="#i-pin2"/></svg></button></div>
    <div class="play">
        <button aria-label="前へ"><svg><use href="#i-prev"/></svg></button><button aria-label="次へ"><svg><use href="#i-next"/></svg></button><button class="cycle" aria-label="サイクル"><svg><use href="#i-cycle"/></svg></button><button class="stopped" aria-label="停止"><svg><use href="#i-stop"/></svg></button><button class="run" aria-label="再生"><svg><use href="#i-play"/></svg></button><button class="run" aria-label="録音"><svg><use href="#i-rec"/></svg></button>
    </div>
    <i class="dots"></i>
    <div class="grp"><button class="off wide" aria-label="レトロスペクティブ"><svg><use href="#i-moon"/></svg></button></div>
    <div class="grp loc time"><button aria-label="時間表示"><svg><use href="#i-note"/></svg></button><output>1.  1.  1.    0</output><i class="dots"></i></div>
    <div class="grp dark tempo"><button class="on" aria-label="テンポトラック"><svg><use href="#i-tempo"/></svg></button><input type="text" value="147.000" aria-label="テンポ"><i class="spin"></i><span class="sig edge">4/4</span><button class="tap"><span>Tap</span></button><button class="caret" aria-label="タップ設定"></button></div>
    <i class="dots"></i>
    <div class="grp click"><button class="slim" aria-label="メトロノーム"><svg><use href="#i-metro"/></svg></button><button class="slim" aria-label="メトロノーム設定"><svg><use href="#i-gear"/></svg></button></div>
    <i class="dots"></i>
    <div class="meter"><i></i><i></i></div>
    <i class="dots"></i>
</footer>

</body>
</html>
```

FILE: styles.css
```css
* {
  box-sizing: border-box;
}

body {
  margin: 0;
  min-height: 100vh;
  display: flex;
  flex-direction: column;
  background: #25292c;
  color: #c8c9ca;
  font-family: "Noto Sans", "Noto Sans CJK JP", sans-serif;
  font-size: 11px;
  line-height: 16px;
  font-feature-settings: "palt";
  overflow: hidden;
}

button, input, select {
  font: inherit;
  font-feature-settings: inherit;
  color: inherit;
  background: none;
  border: 0;
  padding: 0;
  margin: 0;
}

h1, h2, p { margin: 0; }
a { color: inherit; text-decoration: none; }
svg { fill: currentColor; display: block; flex: none; }
.defs { position: absolute; }

/* title + menu */
.titlebar {
  height: 23px;
  display: flex;
  align-items: center;
  padding-left: 2px;
  padding-right: 3px;
  background: linear-gradient(90deg, #222625, #1c222a 40%, #1f2322);
}
.titlebar h1 { font-size: 11px; font-weight: normal; color: #f0f0f0; margin-left: 6px; }
.logo { width: 16px; height: 16px; }
.logo-bg { fill: #14689a; }
.winbtns { margin-left: auto; display: flex; }
.winbtns button { width: 45px; height: 20px; display: flex; align-items: center; justify-content: center; color: #fff; }
.winbtns svg { width: 12px; height: 12px; fill: none; stroke: currentColor; }

.menu { height: 20px; display: flex; align-items: center; padding-left: 1px; }
.menu a { padding: 0 10px; }

/* toolbar groups */
.toolbar {
  display: flex;
  justify-content: space-between;
  height: 39px;
  padding: 7px 5px 0 9px;
}
.tools { display: flex; gap: 5px; }
.tools:nth-child(2) { margin-left: 14px; }
.grp {
  display: flex;
  align-items: center;
  height: 25px;
  flex: none;
  background: #424448;
  border-radius: 3px;
  outline: 1px solid #5b5d60;
  outline-offset: -1px;
  overflow: hidden;
  color: #d4d5d6;
}
.grp button {
  width: 25px;
  height: 25px;
  display: flex;
  align-items: center;
  justify-content: center;
  font-weight: bold;
  font-size: 14px;
}
.grp svg { width: 18px; height: 18px; }
.grp button.on { position: relative; background: #d4d5d7; color: #202326; }
.grp button.off { color: #77797c; }
.grp button.slim { width: 22px; }
.grp button.thin { width: 19px; }
.grp button.thin svg { width: 15px; height: 15px; }
.grp button.wide { width: 38px; }
.grp button.wide span, .tap span { font-weight: normal; font-size: 13px; }
.grp button.big svg { width: 20px; height: 20px; }
.grp.dark, .grp button.ink, .grp button.caret { background: #17191b; }
.grp button.caret::after, .pick::after, .mini.caret::after, .addctl .caret::after {
  content: "";
  width: 8px;
  height: 8px;
  background: #d4d5d6;
  clip-path: polygon(0 0, 100% 0, 50% 100%);
}
.notch { position: relative; }
.notch::before {
  content: "";
  position: absolute;
  bottom: 0;
  left: 9px;
  border: 4px solid transparent;
  border-top: 0;
  border-bottom: 3px solid #1c1e20;
}
.gap-l { margin-left: 5px; }
.edge { border-left: 1px solid #5b5d60; }

.pick {
  display: flex;
  align-items: center;
  height: 25px;
  padding: 0 8px;
  background: #17191b;
}
.pick select { flex: 1; min-width: 0; appearance: none; font-size: 12px; line-height: 18px; }
.pick.lead { gap: 6px; padding-left: 6px; }
.pick.lead svg { width: 14px; height: 14px; }
.pick.small { gap: 4px; }
.pick.small select { font-size: 11px; }
.w100 { width: 100px; }
.w110 { width: 112px; }
.w125 { width: 125px; }
.w135 { width: 138px; }

.dots { width: 2px; height: 12px; flex: none; background: repeating-linear-gradient(#c0c1c2 0 2px, transparent 2px 5px); }
.spin { width: 8px; height: 14px; background: #d4d5d6; clip-path: polygon(50% 0, 100% 40%, 0 40%, 0 60%, 100% 60%, 50% 100%, 0 60%, 0 40%); }

/* status line */
.status { height: 31px; padding-top: 3px; display: flex; justify-content: center; gap: 6px; }
.status div { height: 19px; padding: 0 7px; display: flex; gap: 12px; align-items: center; background: #33363a; }
.status b { color: #dcdddd; }

.infoline { height: 41px; line-height: 42px; text-align: center; background: #18191b; border-bottom: 1px solid #070808; }

.overview { height: 28px; background: #23272a; }
.view { width: 79px; height: 28px; background: #505256; display: flex; align-items: center; }
.view i { width: 16px; height: 28px; background: linear-gradient(transparent 16px, #3b3d40 16px 20px, transparent 20px), repeating-linear-gradient(#a9aaab 0 3px, #e4e4e4 3px 4px); }
.view b { width: 31px; height: 4px; margin-top: 8px; background: #b9babb; }

/* zones */
.zones {
  flex: 1;
  display: grid;
  grid-template-columns: 80px minmax(0, 1fr) 230px;
  gap: 4px;
  padding: 5px 4px;
  background: #060707;
}
.center { display: flex; flex-direction: column; }
.panel { background: #25292c; border: 2px solid #55575a; border-radius: 7px; }

/* channel */
.channel {
  background: #25292c;
  border: 2px solid #55575a;
  border-radius: 7px;
  padding: 2px 7px 6px;
  display: flex;
  flex-direction: column;
}
.channel h2 { font-size: 11px; line-height: 18px; text-align: center; color: #fff; }
.plate {
  height: 19px;
  margin-top: 9px;
  background: #727476;
  border: 1px solid #8a8c8e;
  border-radius: 2px;
  color: #e4e4e4;
  font-weight: bold;
  line-height: 17px;
  text-align: center;
}
.eq { height: 59px; margin-top: 8px; background: linear-gradient(transparent 29px, #4b93c4 29px 31px, transparent 31px), #050606; }
.split { display: flex; margin-top: 19px; }
.split span { flex: 1; border-right: 1px solid #8a8c8e; }
.split svg { width: 13px; height: 13px; margin: 2px 3px; }
.slot { height: 17px; margin: 8px 2px 0; background: #222527; border: 1px solid #121415; border-radius: 2px; }
.sends { margin-top: 22px; }
.slot.tall { height: 35px; }
.handle { height: 2px; margin-top: 96px; background: linear-gradient(90deg, #66686a 18px, transparent 18px 44px, #66686a 44px), repeating-linear-gradient(90deg, #fff 0 4px, transparent 4px 6px); }
.cells { display: grid; grid-template-columns: 1fr 1fr; gap: 1px; margin-top: 3px; background: #101213; border: 1px solid #101213; }
.cells > * {
  height: 18px;
  background: #2d3033;
  color: #b4b5b6;
  font-size: 12px;
  font-weight: bold;
  display: flex;
  align-items: center;
  justify-content: center;
}
.cells svg { width: 14px; height: 14px; }
.cells .rec { background: #e03c3a; color: #3a0f0f; }
.cells .rec svg { width: 17px; height: 17px; }
.pan { height: 33px; margin-top: 5px; background: #1b1d1f; border-radius: 3px; text-align: center; color: #fff; font-size: 10px; line-height: 11px; }
.pan i { display: block; width: 4px; height: 18px; margin: 2px auto 0; background: #f2f2f2; }
.faders { display: grid; grid-template-columns: 28px 28px; justify-content: center; gap: 4px; margin-top: 8px; }
.lane { position: relative; height: 262px; background: #1a1c1e; border: 1px solid #151718; border-radius: 3px; }
.marks { width: 28px; height: 262px; margin: -1px; }
.marks text { fill: #8c8e90; font-size: 9px; }
.fader { position: absolute; left: 3px; top: 3px; width: 20px; height: 256px; appearance: none; writing-mode: vertical-lr; direction: rtl; }
.fader::-webkit-slider-runnable-track { width: 2px; height: 100%; background: #020202; }
.fader::-webkit-slider-thumb {
  appearance: none;
  width: 18px;
  height: 46px;
  margin-left: -8px;
  background: linear-gradient(#3fb0ea 5px, #a8def8 6px 12px, #d5f0fc 13px 22px, #1b2a33 22px 23px, #fff 23px 32px, #b6e3f8 33px 40px, #22a0e6 41px);
}
.values { margin-top: 5px; }
.values > * { font-weight: normal; font-size: 11px; }
.values .lit { background: #3c3f43; }
.auto { margin-top: 4px; }
.chno { height: 26px; display: flex; align-items: center; justify-content: space-between; padding: 2px 9px 0 3px; font-size: 12px; }
.chno svg { width: 13px; height: 13px; }
.chname { flex: 1; background: #727476; color: #e8e8e8; text-align: center; font-size: 12px; line-height: 28px; }

/* project zone */
.arrange {
  border-color: #fff;
  height: 431px;
  padding: 4px 4px 3px 5px;
  display: grid;
  grid-template-columns: 518px 4px minmax(0, 1fr) 14px;
}
.tracks { display: flex; flex-direction: column; }
.trackbar { display: flex; align-self: flex-start; height: 19px; margin-bottom: 5px; background: #424448; border: 1px solid #5b5d60; border-radius: 2px; color: #e0e0e0; }
.trackbar button { width: 24px; height: 17px; display: grid; place-items: center; }
.trackbar svg { width: 15px; height: 15px; }
.io { height: 21px; display: flex; border-top: 1px solid #5b5d60; border-bottom: 1px solid #060707; margin-right: 11px; }
.io > span:last-child { margin-left: 10px; line-height: 20px; }
.tag { width: 40px; flex: none; display: flex; justify-content: space-between; padding: 3px 4px; background: #6d6f71; color: #17191b; font-size: 12px; }
.tag svg { width: 15px; height: 15px; margin-top: 1px; }
.track { height: 46px; display: flex; border-bottom: 1px solid #060707; border-right: 11px solid #060707; }
.track.selected { background: #a2a3a4; color: #1b1d1f; }
.pair { display: flex; height: 19px; border: 1px solid #17191b; border-radius: 2px; background: #292c2f; color: #b4b5b6; }
.pair button { width: 23px; font-weight: bold; font-size: 12px; line-height: 15px; display: grid; place-items: center; }
.pair svg { width: 14px; height: 14px; }
.ms { margin: 2px 9px 0 5px; }
.ms button { width: 24px; }
.selected .pair { background: #a2a3a4; border-color: #5b5d60; color: #1b1d1f; }
.pair .rec { background: #e03c3a; color: #3a0f0f; }
.name { display: block; height: 22px; line-height: 23px; font-size: 12px; color: #d4d5d6; }
.selected .name { color: #1b1d1f; }
.ctl { display: flex; gap: 2px; margin-left: -3px; }
.trackfoot { margin-top: auto; display: flex; align-items: center; padding: 0 6px 0 7px; color: #a9abac; }
.trackfoot i { width: 9px; height: 5px; margin: 0 9px 0 auto; background: #77797b; clip-path: polygon(0 0, 100% 0, 50% 100%); }
.trackfoot svg { width: 12px; height: 12px; color: #77797b; }
.divider { background: linear-gradient(#66686a 196px, transparent 196px 222px, #66686a 222px) 1px 0 / 2px 100% no-repeat, repeating-linear-gradient(#fff 0 4px, transparent 4px 6px) 1px 0 / 2px 222px no-repeat; }

.timeline { display: flex; flex-direction: column; }
.ruler {
  height: 24px;
  display: grid;
  grid-template-columns: repeat(15, 1fr);
  margin: 0 2px 0 9px;
  position: relative;
  background: #1a1c1f;
  border-right: 1px solid #fff;
}
.ruler span { border-left: 1px solid #e8e8e8; padding: 9px 0 0 4px; line-height: 15px; font-size: 12px; font-weight: bold; color: #f0f0f0; }
.ruler::before { content: ""; position: absolute; left: -8px; top: 0; width: 17px; height: 10px; background: #fff; clip-path: polygon(0 0, 100% 0, 50% 100%); }
.events { position: relative; flex: 1; margin: 0 2px 0 9px; }
.grid { position: absolute; inset: 0; display: grid; grid-template-columns: repeat(15, 1fr); border-right: 1px solid #66686a; }
.grid i { border-left: 1px solid #5c5f61; background: linear-gradient(#44484a, #44484a) 50% 0 / 1px 100% no-repeat; }
.grid i:first-child { border-color: #fff; }
.row { position: relative; height: 46px; padding: 3px 0 2px; border-bottom: 1px solid #3c4042; }
.row.short { height: 20px; }
.event { width: 20%; height: 41px; position: relative; border: 1px solid #dcdcdd; background: #78797b; color: #0b0c0d; }
.event span { position: absolute; left: 0; top: 0; padding: 0 5px 0 3px; line-height: 18px; font-weight: 500; background: #8a8c8d; }
.event > svg { position: absolute; left: -1px; top: -1px; width: 100%; height: 41px; fill: #4e5052; }
.event.audio { margin-left: 20%; width: 40%; background: linear-gradient(#8a8c8d 5px, #1d1f20 5px 6px, #505153 6px); }
.event.audio span { font-weight: bold; }
.event em { position: absolute; left: 12px; bottom: 1px; display: flex; align-items: center; gap: 3px; line-height: 14px; padding-right: 1px; font-style: normal; font-size: 10px; background: #8a8c8d; }
.event em svg { width: 9px; height: 7px; }

.hscroll { height: 13px; display: flex; gap: 3px; margin-top: 1px; }
.bar { flex: 1; display: flex; align-items: center; background: #404246; padding: 0 4px; color: #fff; }
.bar svg, .vscroll svg { width: 8px; height: 8px; fill: none; stroke: currentColor; stroke-width: 1.600; }
.bar i { width: 33px; height: 9px; margin-left: 7px; background: #f0f1f1; border-radius: 3px; }
.bar .end { margin-left: auto; }
.hzoom { width: 83px; display: flex; align-items: center; background: #404246; padding: 0 2px; color: #fff; }
.hzoom svg, .vzoom svg { width: 10px; height: 10px; }
.hzoom input { flex: 1; min-width: 0; appearance: none; height: 9px; margin: 0 4px; }
.hzoom input::-webkit-slider-runnable-track { height: 1px; background: #8a8c8e; }
.hzoom input::-webkit-slider-thumb { appearance: none; width: 9px; height: 9px; margin-top: -4px; border-radius: 50%; background: #fff; }
.mini { width: 12px; height: 12px; flex: none; display: grid; place-items: center; background: #3a3c40; border-radius: 2px; color: #fff; }
.mini svg { width: 10px; height: 10px; stroke-width: 3; }
.mini.caret::after { width: 6px; height: 6px; }
.mini.tall { height: 22px; border: 1px solid #5b5d60; background: #424448; }
.mini.tall::after { width: 7px; height: 8px; }

.vcol { display: flex; flex-direction: column; gap: 3px; width: 12px; justify-self: end; }
.arrange .vcol { margin-bottom: 13px; }
.vzoom, .vscroll { background: #3a3c40; display: flex; flex-direction: column; align-items: center; width: 12px; padding: 2px 0; color: #fff; }
.vzoom { flex: 0 0 83px; }
.vzoom.wave { flex-basis: 48px; }
.vzoom input { flex: 1; min-height: 0; width: 9px; appearance: none; writing-mode: vertical-lr; direction: rtl; margin: 1px 0; }
.vzoom input::-webkit-slider-runnable-track { width: 1px; height: 100%; background: #77797b; }
.vzoom input::-webkit-slider-thumb { appearance: none; width: 9px; height: 9px; margin-left: -4px; border-radius: 50%; background: #fff; }
.vscroll { flex: 1; justify-content: space-between; }
.vscroll i { flex: 1; width: 8px; margin: 5px 0 8px; border-radius: 3px; background: #f0f1f1; }

/* key editor */
.editor { margin-top: 5px; padding: 7px 7px 5px; height: 392px; }
.keytools { height: 32px; padding: 0; justify-content: flex-start; gap: 5px; }
.keytools > .dots { margin: 6px -2px 0; }
.keytools > .dots + .grp { margin-left: 3px; }
.solo text { fill: #d4d5d7; font-size: 14px; font-weight: bold; }
.vel { width: 100px; padding-left: 6px; }
.vel input { width: 32px; margin: 0 4px; text-align: center; font-size: 12px; }
.vel .spin { margin-right: 6px; }
.clip { height: 25px; width: 14px; margin-left: 4px; padding-left: 2px; flex: none; font-size: 10px; line-height: 23px; background: #17191b; border: 1px solid #5b5d60; border-right: 0; border-radius: 3px 0 0 3px; }
.keytools .last { margin-left: auto; }
.infoline.inner { border: 0; height: 40px; }
.keyedit { display: grid; grid-template-columns: 68px minmax(0, 1fr) 12px; }
.lefts { display: flex; flex-direction: column; padding-top: 25px; box-shadow: inset 0 25px #1a1c1f; }
.piano { width: 67px; height: 101px; }
.piano text { font-size: 12px; fill: #17191b; }
.ctrlbox { height: 30px; margin-top: 1px; margin-bottom: 63px; border: 1px solid #55575a; padding: 0 3px; font-size: 9px; line-height: 14px; font-weight: bold; }
.ctrlbox.bright { margin-bottom: 40px; margin-top: 0; }
.addctl { display: flex; height: 12px; margin-top: auto; background: #424448; }
.addctl button { flex: 1; display: grid; place-items: center; }
.addctl button + button { border-left: 1px solid #25292c; }
.addctl svg { width: 10px; height: 10px; }
.roll { padding: 0 2px 0 2px; }
.rollruler { position: relative; height: 25px; background: #1a1c1f; overflow: hidden; }
.bars { width: 105%; height: 100%; display: grid; grid-template-columns: repeat(8, 1fr); }
.rollruler span {
  border-left: 1px solid #f0f0f0;
  padding: 9px 0 0 4px;
  line-height: 15px;
  font-size: 12px;
  font-weight: bold;
  color: #f0f0f0;
  background: linear-gradient(90deg, #8a8c8e 1px, transparent 1px) 0 0 / 25% 8px repeat-x;
}
.rollruler::before { content: ""; position: absolute; left: 0; top: 0; width: 9px; height: 9px; background: #fff; clip-path: polygon(0 0, 100% 0, 0 100%); }
.part { position: absolute; bottom: 0; height: 16px; padding: 0 4px; border: 1px solid #55575a; border-bottom: 0; background: #25292c; font-weight: normal; font-size: 11px; }
.part.from { left: 1px; }
.part.to { right: 60.600%; }
.canvas { position: relative; height: 266px; display: grid; grid-template-rows: 103px 93px 70px; overflow: hidden; }
.canvas .bars { position: absolute; inset: 0 auto 0 0; }
.canvas .bars i { border-left: 1px solid #66686a; background: linear-gradient(90deg, #5b5d60 1px, transparent 1px) 0 0 / 25% 100%, #323336; }
.canvas .bars i.in { background: linear-gradient(90deg, #4b4f51 1px, transparent 1px) 0 0 / 25% 100%, linear-gradient(90deg, #34383a 1px, transparent 1px) 0 0 / 6.250% 100%, #23272a; }
.canvas .bars i:first-child { border-color: #fff; }
.lane32 { position: relative; width: 105%; display: grid; grid-template-columns: repeat(256, 1fr); }
.notes { border-bottom: 2px solid #77797b; background: linear-gradient(transparent 28px, #3f4345 28px 29px, transparent 29px 83px, #54575a 83px 84px, transparent 84px); }
.notes::after, .velocity::after {
  content: "";
  position: absolute;
  left: 47%;
  bottom: -2px;
  width: 24px;
  height: 2px;
  background: repeating-linear-gradient(90deg, #f0f0f0 0 4px, #25292c 4px 6px);
}
.notes b { grid-row: 1; height: 11px; overflow: hidden; border: 1px solid #0b0c0d; background: #bd3a50; color: #fff; font-size: 9px; line-height: 10px; font-weight: normal; padding-left: 3px; }
.n-f3 { grid-column: 18 / 33; margin-top: 17px; }
.n-d3 { grid-column: 17 / 33; margin-top: 50px; }
.velocity { border-bottom: 2px solid #77797b; }
.velocity i { grid-row: 1; align-self: end; height: 70px; background: #ad3a4c; border: 1px solid #0b0c0d; border-bottom: 0; }
.velocity i:nth-child(1) { grid-column: 17; }
.velocity i:nth-child(2) { grid-column: 18; }
.velocity i:nth-child(3) { grid-column: 19; }
.roll .hscroll { margin-top: 0; height: 12px; }
.roll .bar i { width: 28px; margin-left: 15px; }
.editor .vscroll.tiny { flex: 0 0 20px; }
.editor .vscroll { flex: 0 0 89px; }
.editor .vzoom { flex-basis: 77px; }
.editor .idle { color: #5b5d60; }
.editor .low { flex-basis: 69px; }

.tabs { height: 20px; display: flex; color: #d4d5d6; font-weight: bold; line-height: 21px; }
.tabs a { padding: 0 17px; }
.tabs .first { padding: 0 23px; }
.tabs .close { width: 18px; display: grid; place-items: center; }
.tabs .close svg { width: 14px; height: 14px; }
.tabs .active { position: relative; display: flex; align-items: center; justify-content: space-between; width: 107px; padding: 2px 5px 0 18px; margin-top: -2px; background: #25292c; border: 2px solid #55575a; border-top: 0; border-radius: 0 0 4px 4px; color: #fff; }
.tabs .active i { width: 10px; height: 6px; background: #c0c1c2; clip-path: polygon(0 0, 100% 0, 50% 100%); }

/* media rack */
.media { display: flex; flex-direction: column; }
.racktabs { display: flex; height: 22px; font-weight: bold; color: #f0f0f0; text-align: center; line-height: 22px; font-size: 12px; }
.racktabs a { width: 69px; }
.racktabs .active { position: relative; width: 82px; height: 24px; background: #25292c; border: 2px solid #55575a; border-bottom: 0; border-radius: 4px 4px 0 0; line-height: 20px; font-size: 11px; }
.rack { flex: 1; background: #25292c; border: 2px solid #55575a; border-radius: 7px; padding: 7px; }
.search { display: flex; gap: 3px; }
.search label { flex: 1; display: flex; align-items: center; height: 20px; gap: 5px; padding: 0 4px; background: #1b1d1f; border: 1px solid #5b5d60; border-radius: 3px; }
.search label svg { width: 12px; height: 12px; }
.search input { flex: 1; min-width: 0; font-style: italic; }
.search input::placeholder { color: #8a8c8e; }
.search button { width: 25px; height: 20px; display: grid; place-items: center; background: #424448; border: 1px solid #5b5d60; border-radius: 3px; }
.search button svg { width: 15px; height: 13px; }
.crumbs { display: flex; gap: 3px; padding: 6px 0 4px; border-bottom: 1px solid #8a8c8e; }
.crumbs button { width: 20px; height: 20px; display: grid; place-items: center; }
.crumbs svg { width: 14px; height: 14px; }
.crumbs .back { color: #66686a; border: 1px solid #2e3134; }
.tiles { display: grid; grid-template-columns: repeat(2, 108px); justify-content: center; row-gap: 26px; padding: 37px 4px 0 0; }
.tiles a { display: flex; flex-direction: column; align-items: center; gap: 12px; color: #dcdddd; white-space: nowrap; }
.tiles svg { width: 70px; height: 70px; border-radius: 3px; background: #a9abac; fill: #24282b; }
.tiles text { font-size: 41px; font-weight: bold; }

/* transport */
.transport { height: 40px; display: flex; align-items: center; gap: 5px; padding: 0 4px; }
.transport .dots { margin: 0 -1px; }
.transport .dots + .grp { margin-left: 2px; }
.loc { width: 150px; justify-content: space-between; background: #17191b; }
.loc button { background: #424448; }
.loc output { white-space: pre; font-size: 14px; padding-right: 6px; }
.loc.first { margin: 0 5px 0 131px; }
.play { display: flex; height: 32px; background: #66686a; border: 2px solid #a9abac; border-radius: 3px; color: #f0f0f0; }
.play button { width: 38px; display: grid; place-items: center; }
.play svg { width: 17px; height: 17px; }
.play .cycle { width: 45px; }
.play .run { width: 50px; }
.play .stopped { width: 50px; background: #a9abac; color: #17191b; }
.time { width: 152px; }
.transport .time .dots { margin: 0 4px 0 0; }
.tempo { width: 232px; }
.tempo input { width: 56px; margin-left: 10px; font-size: 12px; }
.tempo .sig { width: 50px; margin-left: 8px; text-align: center; font-size: 12px; line-height: 25px; }
.grp button.tap { width: 48px; background: #2d3033; }
.transport .grp.click { margin-left: auto; width: 44px; }
.meter { width: 88px; height: 25px; display: flex; justify-content: space-between; padding: 2px 2px 2px 30px; background: #0e0f10; border: 1px solid #5b5d60; border-radius: 3px; }
.meter i { width: 4px; background: #e03c3a; }
```
